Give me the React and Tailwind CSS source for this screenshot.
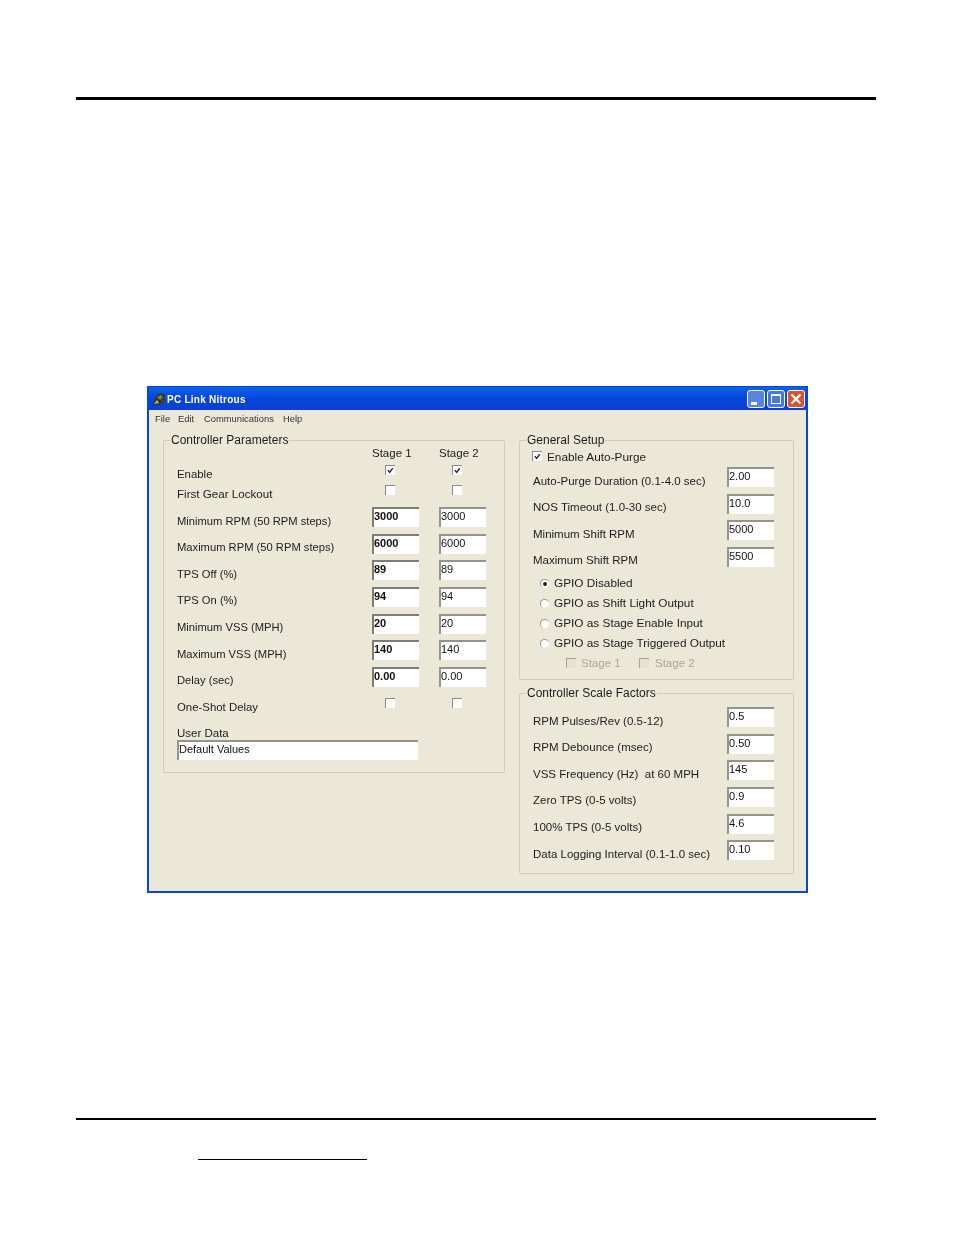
const font = { fontFamily: '"Liberation Sans", Arial, sans-serif' };

const leftRows = [
  ["Minimum RPM (50 RPM steps)", "3000", "3000"],
  ["Maximum RPM (50 RPM steps)", "6000", "6000"],
  ["TPS Off (%)", "89", "89"],
  ["TPS On (%)", "94", "94"],
  ["Minimum VSS (MPH)", "20", "20"],
  ["Maximum VSS (MPH)", "140", "140"],
  ["Delay (sec)", "0.00", "0.00"],
];

const setupRows = [
  ["Auto-Purge Duration (0.1-4.0 sec)", "2.00"],
  ["NOS Timeout (1.0-30 sec)", "10.0"],
  ["Minimum Shift RPM", "5000"],
  ["Maximum Shift RPM", "5500"],
];

const radios = [
  "GPIO Disabled",
  "GPIO as Shift Light Output",
  "GPIO as Stage Enable Input",
  "GPIO as Stage Triggered Output",
];

const scaleRows = [
  ["RPM Pulses/Rev (0.5-12)", "0.5"],
  ["RPM Debounce (msec)", "0.50"],
  ["VSS Frequency (Hz)  at 60 MPH", "145"],
  ["Zero TPS (0-5 volts)", "0.9"],
  ["100% TPS (0-5 volts)", "4.6"],
  ["Data Logging Interval (0.1-1.0 sec)", "0.10"],
];

function Check({ checked, disabled }) {
  return (
    <span
      className={`block w-[10px] h-[10px] border-t border-l ${
        disabled ? "bg-[#e6e3d3] border-[#a5a598]" : "bg-white border-[#8b8b84]"
      }`}
    >
      {checked && (
        <svg viewBox="0 0 10 10" className="w-[9px] h-[9px]">
          <path d="M2 4.5 L4 7 L7.5 2.5" fill="none" stroke="#222" strokeWidth="1.5" />
        </svg>
      )}
    </span>
  );
}

function Radio({ on }) {
  return (
    <span className="flex items-center justify-center w-[9px] h-[9px] rounded-full bg-white border-t border-l border-[#9a9a90]">
      {on && <span className="block w-[4px] h-[4px] rounded-full bg-[#222]" />}
    </span>
  );
}

function Field({ value, bold, className = "w-[47px]" }) {
  return (
    <div
      className={`h-[20px] bg-white border-t-2 border-l-2 pt-[1px] text-[11px] leading-[13px] text-[#111] ${
        bold ? "font-bold border-[#7d7d75]" : "border-[#94948b]"
      } ${className}`}
    >
      {value}
    </div>
  );
}

function Group({ title, className, children }) {
  return (
    <fieldset className={`border border-[#cfccbc] rounded-[2px] ${className}`}>
      <legend className="ml-[6px] px-[1px] h-[14px] text-[12px] leading-[14px] text-[#1c1c1c]">
        {title}
      </legend>
      {children}
    </fieldset>
  );
}

function Label({ size = "text-[11.5px]", children }) {
  return <div className={`pt-[6.5px] leading-[14px] text-[#1c1c1c] whitespace-pre ${size}`}>{children}</div>;
}

function SideRow({ label, value }) {
  return (
    <div className="flex justify-between h-[26.67px] pl-[13px] pr-[19px]">
      <Label>{label}</Label>
      <Field value={value} />
    </div>
  );
}

function WindowButton({ className, children }) {
  return (
    <div className={`relative w-[18px] h-[18px] rounded-[3px] border border-white ${className}`}>{children}</div>
  );
}

function AppIcon() {
  return (
    <svg viewBox="0 0 14 14" className="w-[14px] h-[14px] shrink-0">
      <path d="M1 13 L4 4 L9 1 L13 3 L12 10 L6 13 Z" fill="#2e3b22" />
      <path d="M5 5 L9 3 L11 5 L8 8 Z" fill="#6f8a3c" />
      <path d="M2 12 L5 8 L7 11 Z" fill="#c9b27a" />
      <path d="M9 8 L12 8 L11 11 Z" fill="#8a2a1e" />
    </svg>
  );
}

export default function App() {
  return (
    <div className="w-[954px] h-[1235px] bg-white pt-[97px] pl-[76px] pr-[78px]" style={font}>
      <div className="h-[3px] bg-black" />

      {/* dialog */}
      <div className="mt-[286px] ml-[71px] w-[661px] h-[507px] flex flex-col border-2 border-t border-[#0a45d8] bg-[#ebe8d8] blur-[0.4px]">
        <div className="flex items-center h-[23px] pl-[3px] pr-[1px] bg-gradient-to-b from-[#0a62ea] via-[#0646dc] to-[#0a3fd4]">
          <AppIcon />
          <span className="ml-[1px] pt-[1px] text-[10px] font-bold text-white tracking-[0.25px]">PC Link Nitrous</span>
          <div className="ml-auto flex gap-[2px]">
            <WindowButton className="bg-[#5a82e0]">
              <span className="absolute left-[3px] bottom-[2px] w-[6px] h-[3px] bg-white" />
            </WindowButton>
            <WindowButton className="bg-[#4a76e0]">
              <span className="absolute left-[3px] top-[3px] w-[10px] h-[10px] border border-t-2 border-white" />
            </WindowButton>
            <WindowButton className="bg-[#d8532f]">
              <svg viewBox="0 0 16 16" className="w-full h-full">
                <path d="M3.5 3.5 L12.5 12.5 M12.5 3.5 L3.5 12.5" stroke="#fff" strokeWidth="2.2" />
              </svg>
            </WindowButton>
          </div>
        </div>

        <div className="flex items-center h-[18px] pl-[6px] text-[9.4px] text-[#333]">
          <span className="w-[23px]">File</span>
          <span className="w-[26px]">Edit</span>
          <span className="w-[79px]">Communications</span>
          <span>Help</span>
        </div>

        <div className="flex gap-[14px] pt-[5px] pl-[14px]">
          <Group title="Controller Parameters" className="w-[342px] h-[340px]">
            <div className="pl-[13px]">
              <div className="grid grid-cols-[175px_47px_47px] gap-x-[20px] h-[16px] text-[11.5px] leading-[13px] text-[#1c1c1c]">
                <span />
                <span>Stage 1</span>
                <span>Stage 2</span>
              </div>
              <div className="grid grid-cols-[175px_47px_47px] gap-x-[20px] h-[20px]">
                <div className="pt-[4px] text-[11.4px] leading-[14px] text-[#1c1c1c]">Enable</div>
                <div className="pl-[13px] pt-[2px]"><Check checked /></div>
                <div className="pl-[13px] pt-[2px]"><Check checked /></div>
              </div>
              <div className="grid grid-cols-[175px_47px_47px] gap-x-[20px] h-[24px]">
                <div className="pt-[4px] text-[11.6px] leading-[14px] text-[#1c1c1c]">First Gear Lockout</div>
                <div className="pl-[13px] pt-[2px]"><Check /></div>
                <div className="pl-[13px] pt-[2px]"><Check /></div>
              </div>
              {leftRows.map(([label, a, b]) => (
                <div key={label} className="grid grid-cols-[175px_47px_47px] gap-x-[20px] h-[26.67px]">
                  <Label size="text-[11.2px]">{label}</Label>
                  <Field value={a} bold />
                  <Field value={b} />
                </div>
              ))}
              <div className="grid grid-cols-[175px_47px_47px] gap-x-[20px] h-[33px]">
                <div className="pt-[6px] text-[11.4px] leading-[14px] text-[#1c1c1c]">One-Shot Delay</div>
                <div className="pl-[13px] pt-[4px]"><Check /></div>
                <div className="pl-[13px] pt-[4px]"><Check /></div>
              </div>
              <div className="text-[11.5px] leading-[13px] text-[#1c1c1c]">User Data</div>
              <Field value="Default Values" className="w-[241px]" />
            </div>
          </Group>

          <div className="flex flex-col gap-[6px] w-[275px]">
            <Group title="General Setup" className="h-[247px]">
              <div className="flex items-center h-[18px] pl-[12px] gap-[5px] text-[11.8px] text-[#1c1c1c]">
                <Check checked />
                <span className="pt-[3px]">Enable Auto-Purge</span>
              </div>
              <div className="pt-[2px]">
                {setupRows.map(([label, value]) => (
                  <SideRow key={label} label={label} value={value} />
                ))}
              </div>
              <div className="pl-[20px]">
                {radios.map((text, i) => (
                  <div key={text} className="flex items-center gap-[5px] h-[20px] text-[11.8px] text-[#1c1c1c]">
                    <Radio on={i === 0} />
                    <span>{text}</span>
                  </div>
                ))}
              </div>
              <div className="flex items-center h-[19px] pl-[46px] text-[11.5px] text-[#a8a698]">
                <Check disabled />
                <span className="ml-[5px] w-[58px]">Stage 1</span>
                <Check disabled />
                <span className="ml-[6px]">Stage 2</span>
              </div>
            </Group>

            <Group title="Controller Scale Factors" className="h-[188px] pt-0">
              <div className="pt-[7px]">
                {scaleRows.map(([label, value]) => (
                  <SideRow key={label} label={label} value={value} />
                ))}
              </div>
            </Group>
          </div>
        </div>
      </div>

      <div className="mt-[225px] h-[2px] bg-black" />
      <div className="mt-[39px] ml-[122px] w-[169px] h-px bg-black" />
    </div>
  );
}
